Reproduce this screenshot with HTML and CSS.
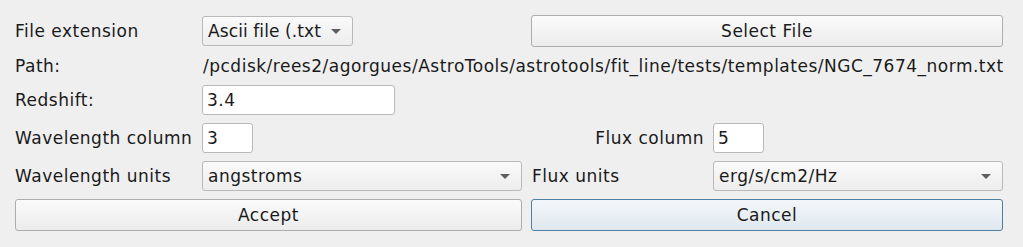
FILE: index.html
```html
<!DOCTYPE html>
<html>
<head>
<meta charset="utf-8">
<link rel="stylesheet" href="styles.css">
</head>
<body>
<div class="dialog">
  <div class="label">File extension</div>
  <div class="cell">
    <div class="combo combo-small"><span class="combo-text">Ascii file (.txt</span><span class="arrow"></span></div>
  </div>
  <div class="cell span-2"><button class="btn btn-full">Select File</button></div>

  <div class="label">Path:</div>
  <div class="label path span-3">/pcdisk/rees2/agorgues/AstroTools/astrotools/fit_line/tests/templates/NGC_7674_norm.txt</div>

  <div class="label">Redshift:</div>
  <div class="cell span-3"><div class="input input-redshift">3.4</div></div>

  <div class="label">Wavelength column</div>
  <div class="cell"><div class="input input-small">3</div></div>
  <div class="label label-right">Flux column</div>
  <div class="cell"><div class="input input-small">5</div></div>

  <div class="label">Wavelength units</div>
  <div class="cell"><div class="combo combo-full"><span class="combo-text">angstroms</span><span class="arrow"></span></div></div>
  <div class="label label-flux">Flux units</div>
  <div class="cell"><div class="combo combo-full"><span class="combo-text">erg/s/cm2/Hz</span><span class="arrow"></span></div></div>

  <div class="cell span-2"><button class="btn btn-full">Accept</button></div>
  <div class="cell span-2"><button class="btn btn-full btn-default">Cancel</button></div>
</div>
</body>
</html>
```

FILE: styles.css
```css
html, body {
  margin: 0;
  padding: 0;
  background: #efefef;
}

body {
  width: 1023px;
  height: 247px;
  overflow: hidden;
  font-family: "DejaVu Sans", sans-serif;
  font-size: 17px;
  letter-spacing: 0.5px;
  color: #1a1a1a;
}

.dialog {
  display: grid;
  grid-template-columns: 178px 320px 173px 290px;
  grid-template-rows: 32px 22px 30px 30px 30px 32px;
  column-gap: 9px;
  row-gap: 8px;
  padding: 15px 20px 16px 15px;
}

.label {
  display: flex;
  align-items: center;
  white-space: nowrap;
}

.path {
  padding-left: 1px;
}

.label-right {
  justify-content: flex-end;
}

.label-flux {
  padding-left: 1px;
}

.cell {
  display: flex;
  align-items: center;
}

.span-2 {
  grid-column: span 2;
}

.span-3 {
  grid-column: span 3;
}

.btn {
  font-family: inherit;
  font-size: inherit;
  letter-spacing: inherit;
  color: inherit;
  height: 32px;
  border: 1px solid #adadad;
  border-radius: 3px;
  background: linear-gradient(#fbfbfb, #ececec);
  padding: 0;
  margin: 0;
}

.btn-full {
  width: 100%;
}

.btn-default {
  border-color: #4f7ea3;
  background: linear-gradient(#f3f7fa, #dfe8ef);
}

.combo {
  box-sizing: border-box;
  height: 30px;
  display: flex;
  align-items: center;
  border: 1px solid #b9b9b9;
  border-radius: 3px;
  background: linear-gradient(#fafafa, #ededed);
  padding: 0 11px 0 5px;
}

.combo-small {
  width: 151px;
}

.combo-small .combo-text {
  letter-spacing: 0.1px;
}

.combo-full {
  width: 100%;
}

.combo-text {
  flex: 1;
  min-width: 0;
  white-space: nowrap;
}

.arrow {
  flex: none;
  width: 0;
  height: 0;
  margin-left: 6px;
  border-left: 5px solid transparent;
  border-right: 5px solid transparent;
  border-top: 5px solid #5e5e5e;
}

.input {
  box-sizing: border-box;
  height: 30px;
  display: flex;
  align-items: center;
  border: 1px solid #b9b9b9;
  border-radius: 3px;
  background: #ffffff;
  padding: 0 4px;
}

.input-redshift {
  width: 193px;
}

.input-small {
  width: 51px;
}
```
